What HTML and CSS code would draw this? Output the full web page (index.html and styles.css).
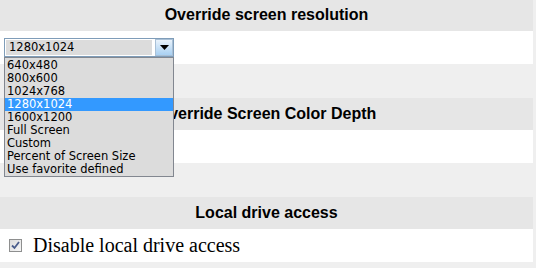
FILE: index.html
```html
<!DOCTYPE html>
<html lang="en">
<head>
    <meta charset="UTF-8">
    <meta name="viewport" content="width=device-width, initial-scale=1.0">
    <title>Display settings</title>
    <link rel="stylesheet" href="styles.css">
</head>
<body>
    <div class="section">
        <div class="section-title">Override screen resolution</div>
        <div class="section-body">
            <div class="select">
                <span class="select-value">1280x1024</span>
                <span class="select-button">
                    <svg width="9" height="5" viewBox="0 0 9 5"><path d="M0 0H9L4.5 5Z" fill="#000"/></svg>
                </span>
                <ul class="select-list">
                    <li>640x480</li>
                    <li>800x600</li>
                    <li>1024x768</li>
                    <li class="selected">1280x1024</li>
                    <li>1600x1200</li>
                    <li>Full Screen</li>
                    <li>Custom</li>
                    <li>Percent of Screen Size</li>
                    <li>Use favorite defined</li>
                </ul>
            </div>
        </div>
    </div>

    <div class="section">
        <div class="section-title">Override Screen Color Depth</div>
        <div class="section-body"></div>
    </div>

    <div class="section">
        <div class="section-title">Local drive access</div>
        <div class="section-body">
            <label class="check-row">
                <span class="checkbox">
                    <svg width="9" height="9" viewBox="0 0 9 9"><path d="M1 4.5L3.5 7L8 1" stroke="#4a5d8c" stroke-width="1.8" fill="none"/></svg>
                </span>
                Disable local drive access
            </label>
        </div>
    </div>
</body>
</html>
```

FILE: styles.css
```css
body {
    margin: 0;
    padding: 0;
    background-color: #efefef;
    font-family: "Liberation Sans", Arial, sans-serif;
}

.section {
    width: 533px;
    margin-bottom: 34px;
}

.section-title {
    height: 32px;
    line-height: 31px;
    background-color: #e6e6e6;
    text-align: center;
    font-size: 16px;
    font-weight: bold;
    color: #000;
}

.section:first-child .section-title {
    height: 31px;
    line-height: 29px;
}

.section-body {
    height: 33px;
    box-sizing: border-box;
    background-color: #fff;
}

/* resolution select, drawn open */
.section:first-child .section-body {
    padding: 7px 4px 0;
}

.select {
    position: relative;
    width: 170px;
    height: 19px;
    box-sizing: border-box;
    border: 1px solid #7f9db9;
    display: flex;
    align-items: center;
    padding: 1px;
    gap: 3px;
    font-family: "DejaVu Sans", Verdana, sans-serif;
    font-size: 11.5px;
}

.select-value {
    flex: 1;
    height: 15px;
    line-height: 15px;
    background-color: #dcdcdc;
    padding-left: 3px;
    color: #000;
}

.select-button {
    width: 18px;
    height: 17px;
    margin-right: -1px;
    box-sizing: border-box;
    border: 1px solid #a9c0d6;
    background: linear-gradient(#e9f2fb, #a8d0f2);
    display: flex;
    align-items: center;
    justify-content: center;
}

.select-list {
    position: absolute;
    top: 18px;
    left: -1px;
    width: 170px;
    box-sizing: border-box;
    margin: 0;
    padding: 1px 0 0;
    list-style: none;
    background-color: #dcdcdc;
    border: 1px solid #828790;
    z-index: 2;
}

.select-list li {
    height: 13px;
    line-height: 13px;
    padding-left: 2px;
    color: #000;
    white-space: nowrap;
}

.select-list li.selected {
    background-color: #3399ff;
    color: #fff;
}

.check-row {
    height: 100%;
    display: flex;
    align-items: center;
    gap: 11px;
    padding-left: 9px;
    font-family: "Liberation Serif", "Times New Roman", serif;
    font-size: 20px;
    color: #000;
}

.checkbox {
    width: 13px;
    height: 13px;
    box-sizing: border-box;
    border: 1px solid #8e8f8f;
    background: linear-gradient(135deg, #dcdcdc, #f6f6f6);
    display: flex;
    align-items: center;
    justify-content: center;
}
```
